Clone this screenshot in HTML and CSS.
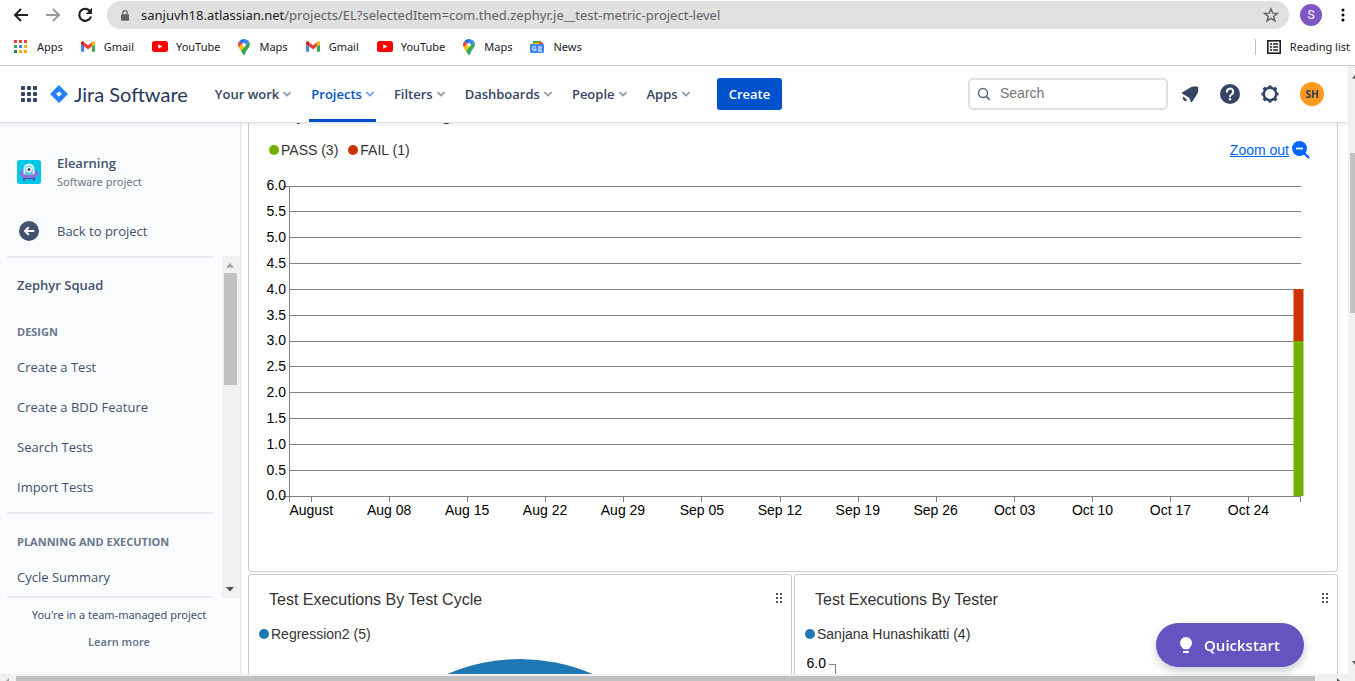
FILE: index.html
```html
<!DOCTYPE html>
<html lang="en">
<head>
<meta charset="utf-8">
<title>Elearning - Zephyr Squad test metrics</title>
<link rel="stylesheet" href="styles.css">
</head>
<body>
<svg class="defs" aria-hidden="true">
  <symbol id="chevron" viewBox="0 0 8 8"><path d="M1 2.6l3 3 3-3" fill="none" stroke="currentColor" stroke-width="2" stroke-linecap="round" stroke-linejoin="round"/></symbol>
  <symbol id="gmail" viewBox="0 0 16 12"><path d="M1 12h2.600V6L0 3.300V11a1 1 0 0 0 1 1z" fill="#4285f4"/><path d="M12.400 12H15a1 1 0 0 0 1-1V3.300L12.400 6z" fill="#34a853"/><path d="M12.400 1.200V6L16 3.300V1.800C16 .1 14.200-.5 12.900.5z" fill="#fbbc04"/><path d="M3.600 6V1.200L8 4.600l4.400-3.400V6L8 9.300z" fill="#ea4335"/><path d="M0 1.800v1.500L3.600 6V1.200L3.100.5C1.800-.5 0 .1 0 1.800z" fill="#c5221f"/></symbol>
  <symbol id="youtube" viewBox="0 0 16 11"><rect width="16" height="11" rx="2.500" fill="#f00"/><path d="M6.300 3.200v4.600l4-2.300z" fill="#fff"/></symbol>
  <symbol id="maps" viewBox="0 0 12 16"><path d="M6 0C4.200 0 2.500.8 1.400 2.100L4.500 4.700 8 .4A6 6 0 0 0 6 0z" fill="#1a73e8"/><path d="M1.400 2.100A6 6 0 0 0 .7 8.500L4.500 4.700z" fill="#ea4335"/><path d="M8 .4L4.500 4.600a2 2 0 0 1 3 2.600L11.300 2.700A6 6 0 0 0 8 .4z" fill="#4285f4"/><path d="M7.500 7.200a2 2 0 0 1-3-2.500L.7 8.600c.5 1.200 1.400 2.200 2.300 3.300z" fill="#fbbc04"/><path d="M11.300 2.700L3 11.900C4.300 13.400 4.700 16 6 16c1.700 0 1.300-3 3.400-5.400C11 8.800 12.900 6 11.300 2.700z" fill="#34a853"/></symbol>
  <symbol id="handle" viewBox="0 0 6 10"><path d="M0 0h2v2H0zM4 0h2v2H4zM0 4h2v2H0zM4 4h2v2H4zM0 8h2v2H0zM4 8h2v2H4z" fill="#555"/></symbol>
</svg>

<div class="browser">
  <div class="toolbar">
    <button class="icon-button" aria-label="Back"><svg width="16" height="16" viewBox="0 0 16 16"><path d="M15 8H2M8 2L2 8l6 6" fill="none" stroke="#202124" stroke-width="2"/></svg></button>
    <button class="icon-button" aria-label="Forward"><svg width="16" height="16" viewBox="0 0 16 16"><path d="M1 8h13M8 2l6 6-6 6" fill="none" stroke="#9a9a9a" stroke-width="2"/></svg></button>
    <button class="icon-button" aria-label="Reload"><svg width="16" height="16" viewBox="0 0 16 16"><path d="M13.300 4.500A6 6 0 1 0 14 9.500" fill="none" stroke="#202124" stroke-width="2.200"/><path d="M15 .8V7H8.800z" fill="#202124"/></svg></button>
    <div class="address">
      <svg width="8" height="11" viewBox="0 0 10 13"><rect y="5" width="10" height="8" rx="1" fill="#5f6368"/><path d="M2.200 5.500V3.300a2.800 2.800 0 0 1 5.600 0v2.200" fill="none" stroke="#5f6368" stroke-width="1.500"/></svg>
      <span class="url"><b>sanjuvh18.atlassian.net</b>/projects/EL?selectedItem=com.thed.zephyr.je__test-metric-project-level</span>
      <svg class="star" width="16" height="16" viewBox="0 0 16 16"><path d="M8 1.800l1.700 4.300 4.600.3-3.600 3 1.200 4.500L8 11.400l-3.900 2.500 1.200-4.500-3.600-3 4.600-.3z" fill="none" stroke="#5f6368" stroke-width="1.400"/></svg>
    </div>
    <button class="profile" aria-label="Profile">S</button>
    <button class="icon-button more" aria-label="Menu"><svg width="4" height="14" viewBox="0 0 4 14"><circle cx="2" cy="2" r="1.500"/><circle cx="2" cy="7" r="1.500"/><circle cx="2" cy="12" r="1.500"/></svg></button>
  </div>
  <div class="bookmarks">
    <a href="#" class="bm"><svg width="14" height="14" viewBox="0 0 14 14"><path d="M0 0h3v3H0zM5 0h3v3H5zM10 0h3v3h-3z" fill="#ea4335"/><path d="M0 5h3v3H0z" fill="#34a853"/><path d="M5 5h3v3H5z" fill="#4285f4"/><path d="M10 5h3v3h-3z" fill="#fbbc04"/><path d="M0 10h3v3H0z" fill="#1e8e3e"/><path d="M5 10h3v3H5zM10 10h3v3h-3z" fill="#f9ab00"/></svg>Apps</a>
    <a href="#" class="bm"><svg width="14" height="11"><use href="#gmail"/></svg>Gmail</a>
    <a href="#" class="bm tight"><svg width="16" height="11"><use href="#youtube"/></svg>YouTube</a>
    <a href="#" class="bm"><svg width="12" height="16"><use href="#maps"/></svg>Maps</a>
    <a href="#" class="bm"><svg width="14" height="11"><use href="#gmail"/></svg>Gmail</a>
    <a href="#" class="bm tight"><svg width="16" height="11"><use href="#youtube"/></svg>YouTube</a>
    <a href="#" class="bm"><svg width="12" height="16"><use href="#maps"/></svg>Maps</a>
    <a href="#" class="bm"><svg width="14" height="12" viewBox="0 0 14 12"><path d="M3 0h8v4H3z" fill="#34a853"/><path d="M1 2.500L12 .8l1 3.200H1z" fill="#fbbc04"/><path d="M9 1l4 1v2H9z" fill="#ea4335"/><rect y="3" width="14" height="9" rx="1" fill="#4285f4"/><path d="M6 6.300A1.900 1.900 0 1 0 6.300 8H4.500M8 6h4M8 8h3.500M8 10h4" fill="none" stroke="#fff" stroke-width="1"/></svg>News</a>
    <a href="#" class="bm reading"><svg width="14" height="14" viewBox="0 0 14 14"><rect x=".8" y=".8" width="12.400" height="12.400" fill="none" stroke="#202124" stroke-width="1.600"/><path d="M3 4h2M6 4h5M3 7h2M6 7h5M3 10h2M6 10h5" stroke="#202124" stroke-width="1.500"/></svg>Reading list</a>
  </div>
</div>

<div class="viewport">
  <div class="page">
    <header class="topnav">
      <button class="icon-button switcher" aria-label="Switch to"><svg width="16" height="16" viewBox="0 0 16 16" fill="#344563"><rect width="4" height="4" rx="1"/><rect x="6" width="4" height="4" rx="1"/><rect x="12" width="4" height="4" rx="1"/><rect y="6" width="4" height="4" rx="1"/><rect x="6" y="6" width="4" height="4" rx="1"/><rect x="12" y="6" width="4" height="4" rx="1"/><rect y="12" width="4" height="4" rx="1"/><rect x="6" y="12" width="4" height="4" rx="1"/><rect x="12" y="12" width="4" height="4" rx="1"/></svg></button>
      <a href="#" class="logo"><svg width="18" height="18" viewBox="0 0 18 18"><path d="M9 0l8.500 8.400a.8.800 0 0 1 0 1.200L9 18 .5 9.600a.8.800 0 0 1 0-1.200zM9 6.200L6.200 9 9 11.800 11.800 9z" fill="#2684ff" fill-rule="evenodd"/><path d="M9 6.200a4.500 4.500 0 0 1 0-6.200L4.600 4.500l3 3.100zM9 11.800a4.500 4.500 0 0 1 0 6.200l4.400-4.500-3-3.100z" fill="#0f5fd8" opacity=".35"/></svg>Jira Software</a>
      <nav class="menu">
        <button>Your work<svg><use href="#chevron"/></svg></button>
        <button class="active">Projects<svg><use href="#chevron"/></svg></button>
        <button>Filters<svg><use href="#chevron"/></svg></button>
        <button>Dashboards<svg><use href="#chevron"/></svg></button>
        <button>People<svg><use href="#chevron"/></svg></button>
        <button>Apps<svg><use href="#chevron"/></svg></button>
      </nav>
      <button class="create">Create</button>
      <label class="search"><svg width="14" height="14" viewBox="0 0 14 14"><circle cx="6" cy="6" r="4.500" fill="none" stroke="#5e6c84" stroke-width="1.500"/><path d="M9.300 9.300l3.500 3.500" stroke="#5e6c84" stroke-width="1.700"/></svg><input type="text" placeholder="Search" aria-label="Search"></label>
      <div class="actions">
        <button class="icon-button" aria-label="Notifications"><svg width="18" height="18" viewBox="0 0 18 18" fill="#344563"><path d="M1.500 8.800c-.8-.4-.8-1 0-1.500L9 2.700c1.200-.8 2.700-1.200 4-1.200h3.200c.7 0 1 .3 1 1V5.500c0 1.300-.4 2.600-1.200 3.800l-4.700 7.300c-.4.700-1.100.7-1.500 0L8.500 13z"/><path d="M2.500 11.500l3.600 3.600a2.500 2.500 0 0 1-3.600-3.600z"/></svg></button>
        <button class="icon-button" aria-label="Help"><svg width="20" height="20" viewBox="0 0 20 20"><circle cx="10" cy="10" r="10" fill="#344563"/><path d="M6.900 7.700a3.100 3.100 0 1 1 4.500 2.800c-.9.500-1.400.9-1.400 2" fill="none" stroke="#fff" stroke-width="2" stroke-linecap="round"/><circle cx="10" cy="15.300" r="1.200" fill="#fff"/></svg></button>
        <button class="icon-button" aria-label="Settings"><svg width="18" height="18" viewBox="0 0 18 18"><circle cx="9" cy="9" r="6.200" fill="none" stroke="#344563" stroke-width="2.400"/><path d="M9 3V.5M9 15v2.500M3 9H.5M15 9h2.500M4.800 4.800L2.700 2.700M13.200 13.200l2.100 2.100M4.800 13.200l-2.100 2.100M13.200 4.800l2.100-2.100" stroke="#344563" stroke-width="3.200"/></svg></button>
        <button class="avatar" aria-label="Account">SH</button>
      </div>
    </header>

    <div class="body">
      <aside class="sidebar">
        <div class="side-head">
          <div class="project">
            <svg width="24" height="24" viewBox="0 0 24 24"><rect width="24" height="24" rx="2.500" fill="#00c7e5"/><path d="M7 17v4M17 17v4" stroke="#5243aa" stroke-width="1.500"/><ellipse cx="12" cy="13.500" rx="9.300" ry="5" fill="#8777d9"/><path d="M6.500 14.500V9a5.500 5.500 0 0 1 11 0v5.500z" fill="#dffaff"/><path d="M8.300 14.500V9.200a3.700 3.700 0 0 1 7.400 0v5.300z" fill="#4fc9dd"/><circle cx="12" cy="9.500" r="3" fill="#fff"/><circle cx="12" cy="9.500" r="1.500" fill="#344563"/><path d="M2.800 13c4 2.600 14.400 2.600 18.400 0 .6 7.500-19 7.500-18.400 0z" fill="#8777d9"/><path d="M6 18.600h12" stroke="#5243aa" stroke-width="1"/></svg>
            <div><strong>Elearning</strong><small>Software project</small></div>
          </div>
          <a href="#" class="back"><svg width="20" height="20" viewBox="0 0 20 20"><circle cx="10" cy="10" r="10" fill="#42526e"/><path d="M14.500 10H6.500M9.200 6.800L6 10l3.200 3.200" fill="none" stroke="#fff" stroke-width="2" stroke-linecap="round" stroke-linejoin="round"/></svg>Back to project</a>
        </div>
        <div class="side-scroll">
          <div class="side-list">
            <h2>Zephyr Squad</h2>
            <h3>DESIGN</h3>
            <a href="#">Create a Test</a>
            <a href="#">Create a BDD Feature</a>
            <a href="#">Search Tests</a>
            <a href="#">Import Tests</a>
            <hr>
            <h3>PLANNING AND EXECUTION</h3>
            <a href="#">Cycle Summary</a>
          </div>
          <div class="side-bar"><svg width="8" height="5" viewBox="0 0 8 5"><path d="M4 0l4 4.500H0z" fill="#a3a3a3"/></svg><i></i><svg width="8" height="5" viewBox="0 0 8 5"><path d="M0 0h8L4 4.500z" fill="#505050"/></svg></div>
        </div>
        <footer class="side-foot"><span>You're in a team-managed project</span><a href="#">Learn more</a></footer>
      </aside>

      <main class="main">
        <div class="board">
          <section class="card wide">
            <h2>Daily Test Execution Progress</h2>
            <div class="legend-row">
              <div class="legend"><span><i class="pass"></i>PASS (3)</span><span><i class="fail"></i>FAIL (1)</span></div>
              <a href="#" class="zoom-link"><span>Zoom out</span><svg width="18" height="18" viewBox="0 0 18 18"><circle cx="7.500" cy="7.500" r="7.500" fill="#0065ff"/><path d="M12 12l5 5" stroke="#0065ff" stroke-width="2.400"/><path d="M4 7.500h7" stroke="#fff" stroke-width="1.800"/></svg></a>
            </div>
            <svg class="plot" role="img" aria-label="Executions per day">
              <g class="lines">
                <rect x="-6" y="10" width="6" height="1"/><rect x="-6" y="320" width="6" height="1"/>
                <rect y="10" width="1" height="316"/>
                <rect y="10" width="100%" height="1"/><rect y="35" width="100%" height="1"/><rect y="61" width="100%" height="1"/><rect y="87" width="100%" height="1"/><rect y="113" width="100%" height="1"/><rect y="139" width="100%" height="1"/><rect y="165" width="100%" height="1"/><rect y="190" width="100%" height="1"/><rect y="216" width="100%" height="1"/><rect y="242" width="100%" height="1"/><rect y="268" width="100%" height="1"/><rect y="294" width="100%" height="1"/><rect y="320" width="100%" height="1"/>
                <rect x="2.180%" y="320" width="1" height="6"/><rect x="9.890%" y="320" width="1" height="6"/><rect x="17.610%" y="320" width="1" height="6"/><rect x="25.320%" y="320" width="1" height="6"/><rect x="33.040%" y="320" width="1" height="6"/><rect x="40.740%" y="320" width="1" height="6"/><rect x="48.500%" y="320" width="1" height="6"/><rect x="56.200%" y="320" width="1" height="6"/><rect x="63.920%" y="320" width="1" height="6"/><rect x="71.640%" y="320" width="1" height="6"/><rect x="79.350%" y="320" width="1" height="6"/><rect x="87.060%" y="320" width="1" height="6"/><rect x="94.780%" y="320" width="1" height="6"/><rect x="99.900%" y="320" width="1" height="6"/>
              </g>
              <g class="y-labels"><text x="-3" y="14">6.0</text><text x="-3" y="40">5.5</text><text x="-3" y="66">5.0</text><text x="-3" y="92">4.5</text><text x="-3" y="118">4.0</text><text x="-3" y="144">3.5</text><text x="-3" y="169">3.0</text><text x="-3" y="195">2.5</text><text x="-3" y="221">2.0</text><text x="-3" y="247">1.5</text><text x="-3" y="273">1.0</text><text x="-3" y="299">0.5</text><text x="-3" y="324">0.0</text></g>
              <g class="x-labels"><text x="2.200%" y="339">August</text><text x="9.900%" y="339">Aug 08</text><text x="17.600%" y="339">Aug 15</text><text x="25.300%" y="339">Aug 22</text><text x="33%" y="339">Aug 29</text><text x="40.800%" y="339">Sep 05</text><text x="48.500%" y="339">Sep 12</text><text x="56.200%" y="339">Sep 19</text><text x="63.900%" y="339">Sep 26</text><text x="71.700%" y="339">Oct 03</text><text x="79.400%" y="339">Oct 10</text><text x="87.100%" y="339">Oct 17</text><text x="94.800%" y="339">Oct 24</text></g>
              <g transform="translate(-8 0)"><rect x="100%" y="113" width="11" height="52" fill="#cc3300" opacity=".5"/><rect x="100%" y="165" width="11" height="155" fill="#75b000" opacity=".5"/></g>
              <g transform="translate(-7 0)"><rect x="100%" y="113" width="9" height="52" fill="#cc3300"/><rect x="100%" y="165" width="9" height="155" fill="#75b000"/></g>
            </svg>
          </section>
          <section class="card">
            <h2>Test Executions By Test Cycle<svg width="6" height="10"><use href="#handle"/></svg></h2>
            <div class="legend low"><span><i class="blue"></i>Regression2 (5)</span></div>
            <div class="pie"></div>
          </section>
          <section class="card">
            <h2>Test Executions By Tester<svg width="6" height="10"><use href="#handle"/></svg></h2>
            <div class="legend low"><span><i class="blue"></i>Sanjana Hunashikatti (4)</span></div>
            <svg class="mini" role="img" aria-label="Executions by tester"><text x="31" y="19">6.0</text><g class="lines"><rect x="34" y="15" width="7" height="1"/><rect x="40" y="15" width="1" height="300"/></g></svg>
          </section>
        </div>
      </main>
    </div>
  </div>
  <div class="vbar"><svg width="5" height="5" viewBox="0 0 5 5"><path d="M5 1v3.500H2z" fill="#505050"/></svg><i></i><svg width="5" height="5" viewBox="0 0 5 5"><path d="M2 0h3v3.500z" fill="#505050"/></svg></div>
</div>
<div class="hbar"><svg width="4" height="5" viewBox="0 0 4 5"><path d="M4 2v3H1z" fill="#a3a3a3"/></svg><i></i><svg width="4" height="5" viewBox="0 0 4 5"><path d="M0 2l3 3H0z" fill="#505050"/></svg></div>
<button class="quickstart"><svg width="12" height="17" viewBox="0 0 12 17" fill="#fff"><path d="M6 0a6 6 0 0 1 6 6c0 2.500-1.600 3.800-2.600 5.200-.4.600-.8 1-1.400 1H4c-.6 0-1-.4-1.400-1C1.600 9.800 0 8.500 0 6a6 6 0 0 1 6-6z"/><rect x="3" y="14" width="6" height="2" rx=".5"/></svg>Quickstart</button>
</body>
</html>
```

FILE: styles.css
```css
* { box-sizing: border-box; }
body {
  margin: 0;
  height: 100vh;
  display: flex;
  flex-direction: column;
  overflow: hidden;
  background: #fff;
  font-family: "Open Sans", "Noto Sans", sans-serif;
  font-size: 13px;
  color: #42526e;
}
button { border: 0; padding: 0; background: none; font: inherit; color: inherit; cursor: pointer; }
a { color: inherit; text-decoration: none; }
svg { flex: none; display: block; }
h2, h3 { margin: 0; }
.defs { position: absolute; width: 0; height: 0; }
.icon-button { display: flex; align-items: center; justify-content: center; }

/* Browser bars */
.browser { flex: none; border-bottom: 1px solid #c8c8c8; color: #202124; }
.toolbar { display: flex; align-items: center; gap: 16px; height: 30px; padding: 0 10px 0 13px; }
.address { flex: 1; min-width: 0; display: flex; align-items: center; height: 28px; margin-left: -2px; padding: 0 10px 0 14px; border-radius: 14px; background: #e0e0e0; }
.url { flex: 1; margin-left: 12px; color: #5f6368; font-family: "Noto Sans", sans-serif; white-space: nowrap; overflow: hidden; }
.url b { font-weight: 400; color: #202124; }
.profile { width: 22px; height: 22px; margin-left: -5px; border-radius: 50%; background: #7e57c2; color: #fff; font: 12px Roboto, sans-serif; }
.more { margin-left: 3px; }
.bookmarks { display: flex; align-items: center; gap: 18px; height: 35px; padding: 0 5px 2px 14px; font: 11px/16px "Noto Sans", sans-serif; }
.bm { display: flex; align-items: center; gap: 9px; white-space: nowrap; }
.bm.tight { gap: 8px; }
.reading { margin-left: auto; padding-left: 11px; border-left: 1px solid #c0c0c0; }

/* Viewport and window scrollbars */
.viewport { flex: 1; min-height: 0; display: flex; }
.page { flex: 1; min-width: 0; display: flex; flex-direction: column; }
.vbar { flex: none; width: 7px; display: flex; flex-direction: column; align-items: flex-end; padding: 8px 0 8px 2px; background: #f1f1f1; }
.vbar i { width: 5px; height: 27%; margin: 74px 0 auto; background: #c1c1c1; }
.hbar { flex: none; display: flex; height: 7px; padding: 2px 14px 0 5px; background: #f1f1f1; }
.hbar i { flex: 1; margin: 0 22px 0 7px; background: #c1c1c1; }

/* Product header */
.topnav { position: relative; z-index: 1; flex: none; display: flex; align-items: center; height: 57px; padding: 0 24px 0 21px; border-bottom: 1px solid #dfe1e6; box-shadow: 0 2px 3px rgba(9, 30, 66, .07); background: #fff; color: #344563; }
.logo { display: flex; align-items: center; gap: 6px; margin-left: 13px; font: 20px/22px Lato, sans-serif; color: #253858; white-space: nowrap; }
.menu { display: flex; align-self: stretch; gap: 16px; margin-left: 25px; }
.menu button { display: flex; align-items: center; gap: 4px; padding: 0 2px; border-bottom: 3px solid transparent; border-top: 3px solid transparent; font-weight: 600; white-space: nowrap; }
.menu button svg { width: 8px; height: 8px; color: #97a0af; }
.menu .active { color: #0052cc; border-bottom-color: #0052cc; }
.menu .active svg { color: #7aa5e6; }
.create { height: 32px; margin-left: 25px; padding: 0 12px; border-radius: 3px; background: #0052cc; color: #fff; font-weight: 600; }
.search { display: flex; align-items: center; gap: 9px; width: 200px; height: 32px; margin-left: auto; padding: 0 7px; border: 2px solid #dfe1e6; border-radius: 5px; }
.search input { flex: 1; min-width: 0; padding: 0 0 2px; border: 0; outline: 0; background: none; font: 14px "Liberation Sans", sans-serif; }
.search input::placeholder { color: #757575; }
.actions { display: flex; align-items: center; gap: 21px; margin-left: 13px; }
.avatar { width: 24px; height: 24px; border-radius: 50%; background: #ff991f; color: #253858; font-size: 10px; font-weight: 700; }

/* Sidebar */
.body { flex: 1; min-height: 0; display: flex; }
.sidebar { flex: none; width: 241px; display: flex; flex-direction: column; border-right: 1px solid #e4e6ea; background: #fafbfc; }
.side-head { flex: none; height: 133px; padding: 28px 17px 0; }
.project { display: flex; align-items: center; gap: 16px; height: 41px; }
.project strong { display: block; font-weight: 600; line-height: 20px; }
.project small { display: block; font: 11px/18px "Noto Sans", sans-serif; color: #6b778c; }
.back { display: flex; align-items: center; gap: 18px; height: 40px; margin-top: 19px; padding-left: 2px; }
.side-scroll { flex: 1; min-height: 0; display: flex; }
.side-list { flex: 1; margin: 0 8px 0 7px; padding-top: 7px; overflow: hidden; border: solid #ebecf0; border-width: 2px 0; }
.side-list h2, .side-list a { display: block; padding-left: 10px; font-size: 13px; line-height: 40px; }
.side-list h2 { font-weight: 600; }
.side-list h3 { margin: 15px 0 3px; padding-left: 10px; font-size: 11px; font-weight: 700; line-height: 24px; color: #6b778c; }
.side-list hr { height: 2px; margin: 5px 0 16px; border: 0; background: #ebecf0; }
.side-bar { flex: none; width: 18px; display: flex; flex-direction: column; align-items: center; padding: 7px 2px 6px 0; background: #f1f1f1; }
.side-bar i { width: 13px; height: 112px; margin: 5px 0 auto; background: #c1c1c1; }
.side-foot { flex: none; display: flex; flex-direction: column; align-items: center; gap: 9px; height: 76px; padding: 8px 2px 0 0; font: 11px/18px "Noto Sans", sans-serif; }
.side-foot a { color: #6b778c; font-weight: 600; }

/* Dashboard */
.main { flex: 1; min-width: 0; overflow: hidden; padding: 0 10px 0 7px; font-family: "Liberation Sans", Arial, sans-serif; font-size: 14px; color: #333; }
.board { display: grid; grid-template-columns: 1fr 1fr; gap: 2px; margin-top: -33px; }
.card { min-width: 0; border: 1px solid #ccc; border-radius: 3px; }
.wide { grid-column: 1 / -1; height: 482px; }
.card h2 { display: flex; align-items: center; justify-content: space-between; height: 49px; padding: 0 9px 0 20px; font-size: 16px; font-weight: 400; }
.card h2 svg { margin-bottom: 3px; }
.legend-row { display: flex; align-items: center; justify-content: space-between; height: 20px; padding: 0 27px 0 20px; }
.legend { display: flex; align-items: center; gap: 10px; }
.legend.low { height: 20px; padding-left: 10px; }
.legend span { display: flex; align-items: center; gap: 2px; }
.legend i { width: 10px; height: 10px; border-radius: 50%; }
.pass { background: #75b000; }
.fail { background: #cc3300; }
.blue { background: #1f77b4; }
.zoom-link { display: flex; align-items: center; gap: 3px; color: #0065ff; }
.zoom-link span { text-decoration: underline; }
.plot { width: calc(100% - 76px); height: 350px; margin: 16px 36px 0 40px; overflow: visible; }
.lines { fill: #808080; shape-rendering: crispEdges; }
.y-labels, .x-labels, .mini text { fill: #000; }
.y-labels, .mini text { text-anchor: end; }
.x-labels { text-anchor: middle; }
.pie { width: 366px; height: 366px; margin: 15px auto 0; border-radius: 50%; background: #1f77b4; }
.mini { width: 100%; height: 366px; margin-top: 5px; }

.quickstart { position: fixed; right: 51px; bottom: 14px; display: flex; align-items: center; justify-content: center; gap: 12px; width: 148px; height: 44px; border-radius: 22px; background: #6554c0; box-shadow: 0 4px 8px rgba(9, 30, 66, .22); color: #fff; font-size: 15px; font-weight: 600; }
```
